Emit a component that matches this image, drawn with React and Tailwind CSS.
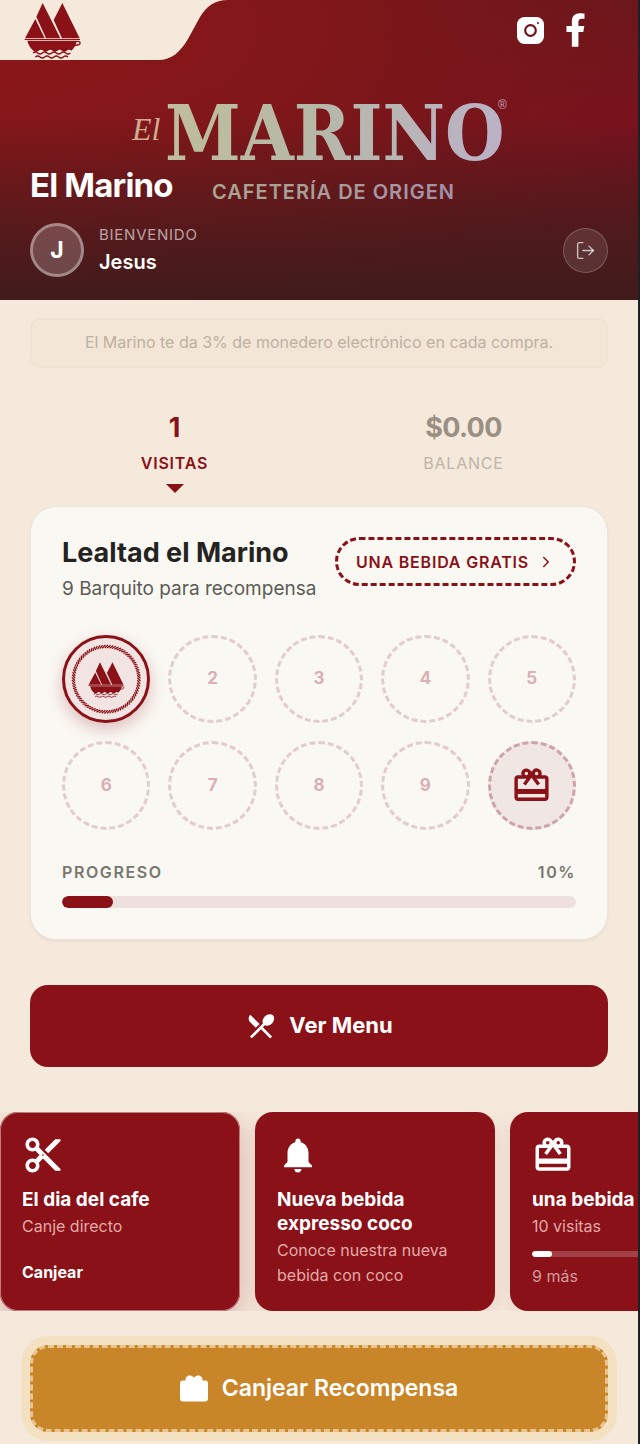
import { LogOut, ChevronRight } from "lucide-react";
import { FaFacebookF } from "react-icons/fa";
import {
  MdCardGiftcard,
  MdContentCut,
  MdNotifications,
  MdRestaurantMenu,
} from "react-icons/md";

function Boat({ className }) {
  return (
    <svg viewBox="0 0 174 174" className={className} fill="currentColor" aria-hidden="true">
      <path d="M34 54 62 112H3ZM56 6 109 112H66L37 47ZM115 6 167 112H114L89 57Z" />
      <path d="M2 114H168V117H2ZM10 119H158C157 132 150 142 142 149Q135 143 128 149T114 149T100 149T86 149T72 149T58 149T44 149T28 149C20 142 13 132 10 119Z" />
      <path
        d="M156 122C172 118 174 132 153 133M27 156q7-6 14 0t14 0t14 0t14 0t14 0t14 0t14 0t14 0M34 168q7-6 14 0t14 0t14 0t14 0t14 0t14 0t14 0"
        fill="none"
        stroke="currentColor"
        strokeWidth="4"
      />
    </svg>
  );
}

function Instagram() {
  return (
    <svg viewBox="0 0 27 27" className="size-[27px]" aria-hidden="true">
      <rect width="27" height="27" rx="7.5" fill="white" />
      <circle cx="13.5" cy="13.5" r="5.3" fill="none" stroke="#6e1520" strokeWidth="2.2" />
      <circle cx="21" cy="6" r="1" fill="#6e1520" />
    </svg>
  );
}

function GiftSolid() {
  return (
    <svg viewBox="0 0 28 27" className="h-[27px] w-[28px]" fill="currentColor" aria-hidden="true">
      <path d="M3 5.500H5.700C4.800 2.500 7.500 0 10.300.5 12 .8 13.200 1.700 14 2.800 14.800 1.700 16 .8 17.700.5 20.500 0 23.200 2.500 22.300 5.500H25a3 3 0 0 1 3 3V23.500a3 3 0 0 1-3 3H3a3 3 0 0 1-3-3V8.500A3 3 0 0 1 3 5.500Z" />
    </svg>
  );
}

function Wordmark() {
  return (
    <svg viewBox="0 -20 380 130" className="h-[130px] w-[380px]" role="img" aria-label="El Marino Cafetería de Origen">
      <defs>
        <linearGradient id="mark" gradientUnits="userSpaceOnUse" x1="0" y1="0" x2="380" y2="40">
          <stop offset="0" stopColor="#c3bf9b" />
          <stop offset="0.45" stopColor="#b6b9a6" />
          <stop offset="1" stopColor="#bbb1c8" />
        </linearGradient>
        <linearGradient id="sub" gradientUnits="userSpaceOnUse" x1="80" y1="0" x2="330" y2="0">
          <stop offset="0" stopColor="#aba78f" />
          <stop offset="1" stopColor="#a690aa" />
        </linearGradient>
      </defs>
      <text x="3" y="44" fontSize="32" fill="#d0ab92" className="font-['Liberation_Serif',serif] italic">El</text>
      <text x="36" y="64" fontSize="76" fill="url(#mark)" className="font-['DejaVu_Serif_Condensed','DejaVu_Serif',serif] font-bold">
        MARINO
        <tspan x="369" y="13" fontSize="12" fill="#c9a5b3" className="font-['Liberation_Sans',sans-serif] font-normal">®</tspan>
      </text>
      <text x="83" y="103" fontSize="20" fill="url(#sub)" className="font-['Inter',sans-serif] font-semibold tracking-wider">CAFETERÍA DE ORIGEN</text>
    </svg>
  );
}

function Header() {
  return (
    <header className="relative flex h-[300px] flex-col justify-between overflow-hidden bg-[linear-gradient(180deg,transparent_40%,rgba(58,28,28,0.85)_100%),radial-gradient(ellipse_at_0%_10%,#8d1618_0%,#80171a_35%,transparent_80%),radial-gradient(ellipse_at_100%_40%,#78111e_0%,transparent_45%),linear-gradient(#66171c,#66171c)] text-white">
      <svg viewBox="0 0 228 60" className="absolute top-0 left-0 h-[60px] w-[228px]" aria-hidden="true">
        <path d="M0 0H228C214 0 206 7 200 17L188 39C180 52 172 60 158 60H0Z" fill="#f5e9dc" />
      </svg>
      <div className="absolute inset-x-0 top-[76px] flex justify-center">
        <Wordmark />
      </div>
      <div className="relative flex h-[60px] items-center justify-between pr-[52px] pl-6">
        <a href="#inicio" aria-label="El Marino" className="text-[#8b1118]">
          <Boat className="size-[58px]" />
        </a>
        <nav className="flex items-center gap-[21px]">
          <a href="#instagram" aria-label="Instagram"><Instagram /></a>
          <a href="#facebook" aria-label="Facebook"><FaFacebookF className="h-[34px] w-[21px]" /></a>
        </nav>
      </div>
      <div className="relative px-[30px] pb-[23px]">
        <h1 className="text-[33px] leading-10 font-bold tracking-tight">El Marino</h1>
        <div className="mt-[18px] flex items-center gap-[15px]">
          <div className="flex size-[54px] items-center justify-center rounded-full border-3 border-white/35 bg-white/20 text-[23px] font-bold">J</div>
          <div className="flex-1">
            <p className="text-[15px] leading-6 tracking-wider text-white/60">BIENVENIDO</p>
            <p className="text-[20px] leading-[30px] font-semibold">Jesus</p>
          </div>
          <button type="button" aria-label="Cerrar sesión" className="flex size-[45px] items-center justify-center rounded-full border border-white/20 bg-white/10 text-white/70">
            <LogOut size={21} strokeWidth={1.6} />
          </button>
        </div>
      </div>
    </header>
  );
}

function Stamp({ n }) {
  if (n === 1) {
    return (
      <li className="relative flex aspect-square items-center justify-center rounded-full border-3 border-[#8b1118] bg-[#f1e4e2] text-[#8b1118] shadow-[0_6px_16px_rgba(139,17,24,0.25)]">
        <svg viewBox="0 0 82 82" className="absolute inset-0 size-full" aria-hidden="true">
          {Array.from({ length: 80 }, (_, i) => (
            <path key={i} d="M39.500 10 42.800 6.900" stroke="currentColor" strokeWidth="1.300" transform={`rotate(${i * 4.5} 41 41)`} />
          ))}
        </svg>
        <Boat className="size-[37px]" />
      </li>
    );
  }
  if (n === 10) {
    return (
      <li className="flex aspect-square items-center justify-center rounded-full border-3 border-dashed border-[#cfa3a8] bg-[#f0e6e4] text-[#8b1118]">
        <MdCardGiftcard size={41} />
      </li>
    );
  }
  return (
    <li className="flex aspect-square items-center justify-center rounded-full border-3 border-dashed border-[#e2cccc] text-[17px] font-bold text-[#d9afb3]">
      {n}
    </li>
  );
}

function Loyalty() {
  return (
    <section className="rounded-[26px] border border-[#ece5dd] bg-[#faf8f3] px-[31px] pt-[30px] pb-[31px] shadow-[0_2px_3px_rgba(60,40,20,0.05)]">
      <div className="flex items-start justify-between">
        <div>
          <h2 className="text-[27px] leading-8 font-bold text-[#24231f]">Lealtad el Marino</h2>
          <p className="mt-[5px] text-[19px] leading-[30px] text-[#5c5b54]">9 Barquito para recompensa</p>
        </div>
        <button type="button" className="flex h-[49px] shrink-0 items-center gap-2 rounded-full border-3 border-dashed border-[#8b1118] px-[18px] text-[16px] font-semibold tracking-wider whitespace-nowrap text-[#8b1118]">
          UNA BEBIDA GRATIS
          <ChevronRight size={18} />
        </button>
      </div>
      <ul className="mt-[31px] grid grid-cols-5 gap-[18px]">
        {[1, 2, 3, 4, 5, 6, 7, 8, 9, 10].map((n) => <Stamp key={n} n={n} />)}
      </ul>
      <div className="mt-[30px] flex justify-between text-[16px] leading-6 font-semibold tracking-widest text-[#78766d]">
        <span id="progreso">PROGRESO</span>
        <span>10%</span>
      </div>
      <div role="progressbar" aria-labelledby="progreso" aria-valuenow={10} className="mt-3 h-3 overflow-hidden rounded-full bg-[#eee0de]">
        <div className="h-full w-1/10 rounded-full bg-[#8b1118]" />
      </div>
    </section>
  );
}

function Promo({ icon, title, text, first, children }) {
  return (
    <article className={`w-[240px] shrink-0 rounded-[18px] bg-[#8b1118] px-[22px] pt-[22px] text-white ${first ? "shadow-[inset_0_0_0_1px_#c07a7c,0_8px_24px_rgba(139,17,24,0.25)]" : "shadow-[0_6px_18px_rgba(139,17,24,0.1)]"}`}>
      {icon}
      <h3 className="mt-3 text-[19px] leading-6 font-bold">{title}</h3>
      <p className="mt-[2px] text-[16px] leading-[25px] text-[#e2a9a8]">{text}</p>
      {children}
    </article>
  );
}

export default function App() {
  return (
    <div className="border-r-2 border-[#1d2124] bg-[#f5e9dc] font-['Inter',sans-serif]">
      <Header />
      <main className="pb-3">
        <div className="px-[30px] pt-[18px]">
          <p className="rounded-[10px] border-2 border-[#efe2d2] bg-[#f3e6d6] px-4 pt-[10px] pb-3 text-center text-[16px] leading-6 text-[#bdb1a2]">
            El Marino te da 3% de monedero electrónico en cada compra.
          </p>
          <div className="mt-[42px] grid h-[96px] grid-cols-2">
            <button type="button" className="flex flex-col items-center text-[#8b1118]">
              <span className="text-[27px] leading-9 font-bold">1</span>
              <span className="mt-[5px] text-[16px] leading-6 font-semibold tracking-wider">VISITAS</span>
              <svg viewBox="0 0 18 9" className="mt-[9px] h-[9px] w-[18px]" aria-hidden="true">
                <path d="M0 0H18L9 9Z" fill="currentColor" />
              </svg>
            </button>
            <button type="button" className="flex flex-col items-center text-[#bfb4a7]">
              <span className="text-[27px] leading-9 font-bold tracking-tight text-[#998f82]">$0.00</span>
              <span className="mt-[5px] text-[16px] leading-6 tracking-wider">BALANCE</span>
            </button>
          </div>
          <Loyalty />
          <button type="button" className="mt-[45px] flex h-[82px] w-full items-center justify-center gap-3 rounded-[18px] bg-[#8b1118] text-[22px] font-bold text-white">
            <MdRestaurantMenu size={32} />
            Ver Menu
          </button>
        </div>
        <section aria-label="Promociones" className="mt-[45px] flex h-[199px] gap-[15px] overflow-hidden">
          <Promo first icon={<MdContentCut size={42} />} title="El dia del cafe" text="Canje directo">
            <button type="button" className="mt-[21px] block text-[16px] leading-6 font-bold">Canjear</button>
          </Promo>
          <Promo icon={<MdNotifications size={42} />} title="Nueva bebida expresso coco" text="Conoce nuestra nueva bebida con coco" />
          <Promo icon={<MdCardGiftcard size={42} />} title="una bebida gratis" text="10 visitas">
            <div className="mt-3 h-[6px] overflow-hidden rounded-full bg-white/20">
              <div className="h-full w-1/10 rounded-full bg-white" />
            </div>
            <p className="mt-[7px] text-[16px] leading-6 text-[#d49b9c]">9 más</p>
          </Promo>
        </section>
        <div className="px-[30px] pt-[34px]">
          <button type="button" className="flex h-[87px] w-full items-center justify-center gap-[14px] rounded-[18px] border-3 border-dashed border-[#e8c491] bg-[#c98629] text-[23px] font-semibold text-white shadow-[0_0_0_9px_#f4e1c2]">
            <GiftSolid />
            Canjear Recompensa
          </button>
        </div>
      </main>
    </div>
  );
}
